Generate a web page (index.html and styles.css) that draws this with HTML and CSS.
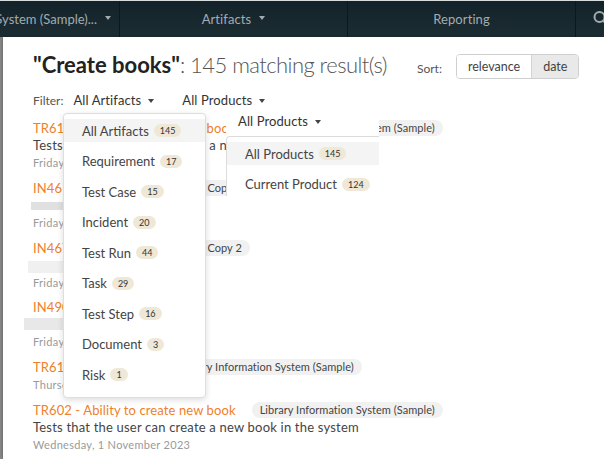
FILE: index.html
```html
<!DOCTYPE html>
<html lang="en">
<head>
<meta charset="utf-8">
<title>Search results</title>
<link rel="stylesheet" href="styles.css">
</head>
<body>
<nav class="nav">
  <div class="nav-item nav-first"><span class="nav-text">Library Information System (Sample)...</span><span class="caret caret-nav"></span></div>
  <div class="nav-item"><span class="nav-text">Artifacts</span><span class="caret caret-nav"></span></div>
  <div class="nav-item"><span class="nav-text">Reporting</span></div>
  <div class="nav-item nav-last">
    <svg class="nav-search" width="18" height="18" viewBox="0 0 18 18"><circle cx="6.5" cy="7" r="5" fill="none" stroke="#a3abaf" stroke-width="2"/><path d="M10.3 10.8l5 5" stroke="#a3abaf" stroke-width="2.2"/></svg>
  </div>
</nav>
<div class="stage">
  <div class="modal">
    <div class="head">
      <h1 class="title"><span class="q">"Create books"</span><span class="count">: 145 matching result(s)</span></h1>
      <span class="sort-label">Sort:</span>
      <div class="sort-group">
        <span class="sort-btn">relevance</span>
        <span class="sort-btn active">date</span>
      </div>
    </div>
    <div class="filters">
      <span class="filter-label">Filter:</span>
      <span class="filter-toggle">All Artifacts<span class="caret"></span></span>
      <span class="filter-toggle second">All Products<span class="caret"></span></span>
    </div>

    <div class="results">
      <div class="result">
        <div class="r-title"><span class="r-link">TR616 - Ability to create new book</span><span class="pill">Library Information System (Sample)</span></div>
        <div class="r-desc">Tests that the user can create a new book in the system</div>
        <div class="r-date">Friday, 3 November 2023</div>
      </div>
      <div class="result">
        <div class="r-title"><span class="r-link">IN461 - Can't create book</span><span class="pill">Copy 2</span></div>
        <div class="r-desc"><div class="bar bar-a"></div></div>
        <div class="r-date">Friday, 3 November 2023</div>
      </div>
      <div class="result">
        <div class="r-title"><span class="r-link">IN467 - Can't create book</span><span class="pill">Copy 2</span></div>
        <div class="r-desc"><div class="bar bar-b"></div></div>
        <div class="r-date">Friday, 3 November 2023</div>
      </div>
      <div class="result">
        <div class="r-title"><span class="r-link">IN490 - Book</span></div>
        <div class="r-desc"><div class="bar bar-c"></div></div>
        <div class="r-date">Friday, 3 November 2023</div>
      </div>
      <div class="result">
        <div class="r-title"><span class="r-link">TR611 - Create book</span><span class="pill">Library Information System (Sample)</span></div>
        <div class="r-date">Thursday, 2 November 2023</div>
      </div>
      <div class="result">
        <div class="r-title"><span class="r-link">TR602 - Ability to create new book</span><span class="pill">Library Information System (Sample)</span></div>
        <div class="r-desc">Tests that the user can create a new book in the system</div>
        <div class="r-date">Wednesday, 1 November 2023</div>
      </div>
    </div>

    <ul class="menu menu-artifacts">
      <li class="menu-item hover">All Artifacts<span class="badge">145</span></li>
      <li class="menu-item">Requirement<span class="badge">17</span></li>
      <li class="menu-item">Test Case<span class="badge">15</span></li>
      <li class="menu-item">Incident<span class="badge">20</span></li>
      <li class="menu-item">Test Run<span class="badge">44</span></li>
      <li class="menu-item">Task<span class="badge">29</span></li>
      <li class="menu-item">Test Step<span class="badge">16</span></li>
      <li class="menu-item">Document<span class="badge">3</span></li>
      <li class="menu-item">Risk<span class="badge">1</span></li>
    </ul>

    <div class="products-pop">
      <span class="filter-toggle pop-toggle">All Products<span class="caret"></span></span>
      <ul class="menu menu-products">
        <li class="menu-item hover">All Products<span class="badge">145</span></li>
        <li class="menu-item">Current Product<span class="badge">124</span></li>
      </ul>
    </div>
  </div>
</div>
</body>
</html>
```

FILE: styles.css
```css
html, body {
  margin: 0;
  padding: 0;
}
body {
  width: 604px;
  height: 459px;
  overflow: hidden;
  background: #8c8c8c;
  font-family: Lato, "Open Sans", "Liberation Sans", sans-serif;
  color: #333;
}

/* top navigation */
.nav {
  display: flex;
  height: 36px;
  border-top: 1px solid #d9dcdd;
  background: linear-gradient(#13222a, #1c2d32);
  overflow: hidden;
}
.nav-item {
  flex: 0 0 228px;
  display: flex;
  align-items: center;
  justify-content: center;
  border-left: 1px solid #0d181c;
  box-sizing: border-box;
  color: #a3abaf;
  font-size: 13px;
  letter-spacing: 0.1px;
  white-space: nowrap;
  overflow: hidden;
}
.nav-first {
  flex: 0 0 119px;
  justify-content: flex-end;
  padding-right: 8px;
  border-left: 0;
  letter-spacing: 0;
}
.nav-last {
  justify-content: flex-start;
  padding-left: 17px;
}
.nav-search {
  flex: none;
}
.caret {
  display: inline-block;
  width: 0;
  height: 0;
  margin-left: 7px;
  border-left: 3.5px solid transparent;
  border-right: 3.5px solid transparent;
  border-top: 4px solid #444;
  vertical-align: middle;
  position: relative;
  top: -1px;
}
.caret-nav {
  border-top-color: #a3abaf;
  margin-left: 8px;
  flex: none;
}

/* modal */
.stage {
  height: 422px;
  padding-left: 3px;
}
.modal {
  position: relative;
  height: 100%;
  background: #fff;
  padding-left: 30px;
  box-shadow: -1px 0 3px rgba(0,0,0,0.25);
  overflow: hidden;
}
.head {
  display: flex;
  align-items: center;
  padding-top: 14px;
  height: 27px;
}
.title {
  margin: 0;
  font-size: 22px;
  font-weight: 400;
  white-space: nowrap;
}
.q {
  font-weight: 700;
  color: #222;
}
.count {
  font-weight: 300;
  color: #555;
  letter-spacing: -0.55px;
}
.sort-label {
  margin-left: 30px;
  margin-top: 7px;
  font-size: 12px;
  color: #555;
}
.sort-group {
  display: flex;
  margin-left: 14px;
  margin-top: 3px;
  border: 1px solid #cfcfcf;
  border-radius: 4px;
  overflow: hidden;
}
.sort-btn {
  display: block;
  height: 23px;
  line-height: 23px;
  padding: 0 11px;
  font-size: 12.5px;
  color: #444;
  background: #fff;
}
.sort-btn.active {
  background: #e9e9e9;
  border-left: 1px solid #d4d4d4;
}

.filters {
  display: flex;
  align-items: center;
  height: 18px;
  margin-top: 13px;
  white-space: nowrap;
}
.filter-label {
  font-size: 12px;
  color: #555;
  margin-right: 10px;
}
.filter-toggle {
  font-size: 13px;
  color: #333;
  letter-spacing: 0.1px;
}
.filter-toggle.second {
  margin-left: 28px;
}

/* results */
.results {
  margin-top: 10px;
}
.result {
  margin-bottom: 7.8px;
}
.r-title {
  display: flex;
  align-items: center;
  height: 18px;
  white-space: nowrap;
}
.r-link {
  color: #f0802b;
  font-size: 13px;
  letter-spacing: 0.1px;
}
.pill {
  margin-left: 16px;
  height: 16px;
  line-height: 16px;
  padding: 0 8px;
  border-radius: 8px;
  background: #f1f1f1;
  color: #444;
  font-size: 11px;
  letter-spacing: 0.05px;
}
.r-desc {
  display: flow-root;
  height: 17px;
  line-height: 17px;
  font-size: 13px;
  color: #444;
  letter-spacing: 0.2px;
  white-space: nowrap;
}
.r-date {
  height: 17px;
  line-height: 17px;
  font-size: 11px;
  color: #9a9a9a;
  letter-spacing: 0.3px;
}
.bar {
  width: 120px;
  background: #e2e2e2;
}
.bar-a { margin-top: 5px; height: 8px; margin-left: -2px; background: #e0e0e0; }
.bar-b { margin-top: 4px; height: 12px; margin-left: -5px; background: #f0f0f0; }
.bar-c { margin-top: 2px; height: 12px; margin-left: -9px; background: #e8e8e8; }

/* dropdown menus */
.menu {
  list-style: none;
  margin: 0;
  background: #fff;
  box-sizing: border-box;
}
.menu-artifacts {
  position: absolute;
  left: 60px;
  top: 76px;
  width: 143px;
  padding: 5px 0 3px;
  border: 1px solid #dedede;
  border-radius: 4px;
  box-shadow: 0 2px 6px rgba(0,0,0,0.14);
}
.menu-item {
  display: flex;
  align-items: center;
  height: 23px;
  margin-bottom: 7.5px;
  padding-left: 18px;
  font-size: 13px;
  color: #444;
  letter-spacing: 0;
  white-space: nowrap;
}
.menu-item.hover {
  background: #f4f4f4;
}
.badge {
  display: inline-block;
  margin-left: 5px;
  height: 13px;
  line-height: 13px;
  padding: 0 6px;
  border-radius: 7px;
  background: #efe8d6;
  color: #333;
  font-size: 9px;
  letter-spacing: 0;
}
.products-pop {
  position: absolute;
  left: 223px;
  top: 71px;
  width: 153px;
  height: 97px;
  background: #fff;
  overflow: hidden;
}
.pop-toggle {
  display: block;
  margin: 4px 0 0 12px;
  height: 18px;
  line-height: 18px;
}
.menu-products {
  width: 180px;
  margin-top: 6px;
  padding: 5px 0 0;
  border-left: 1px solid #dcdcdc;
  border-top: 1px solid #dcdcdc;
  border-radius: 4px 0 0 0;
}
```
